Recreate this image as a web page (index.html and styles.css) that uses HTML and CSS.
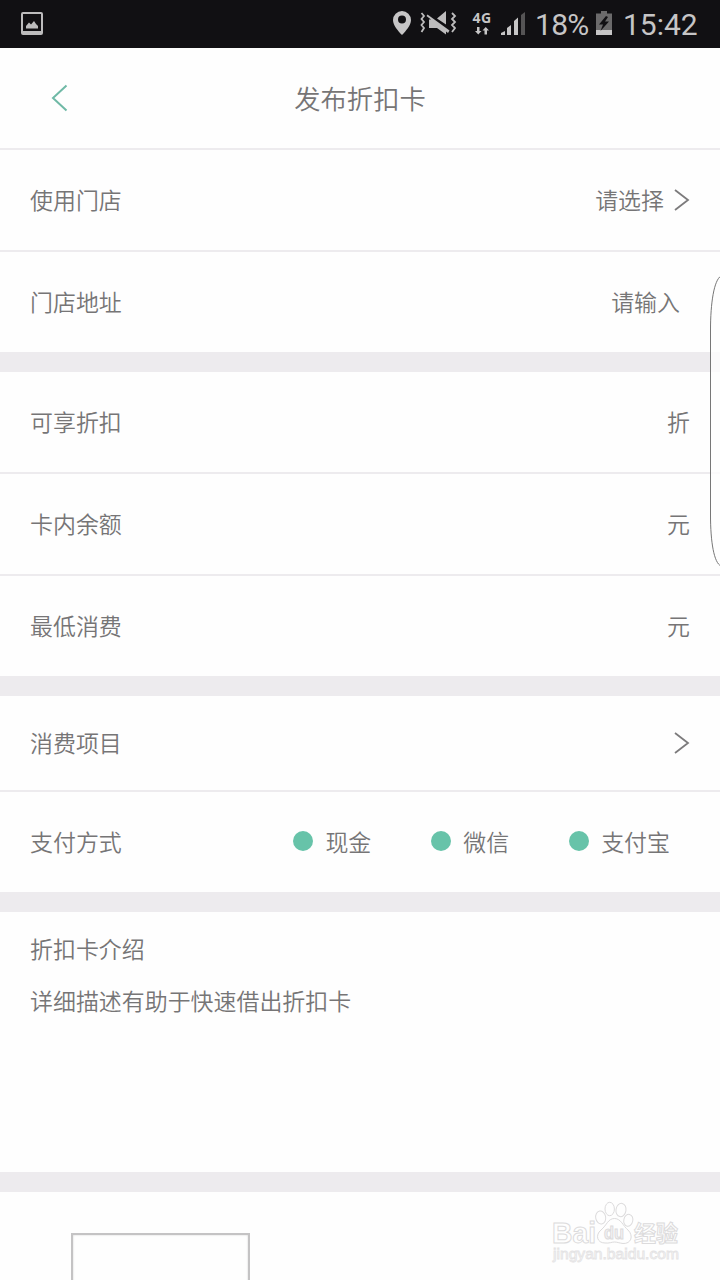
FILE: index.html
```html
<!DOCTYPE html>
<html lang="zh-CN">
  <head>
    <meta charset="UTF-8" />
    <meta name="viewport" content="width=device-width, initial-scale=1.0" />
    <title>发布折扣卡</title>
    <link rel="stylesheet" href="styles.css">
  </head>
  <body>
    <!-- Status bar -->
    <div class="status-bar">
      <svg class="icon-picture" width="22" height="24" viewBox="0 0 22 24">
        <path fill="#bdbcbd" fill-rule="evenodd" d="M2 0H20Q22 0 22 2V21Q22 23 20 23H2Q0 23 0 21V2Q0 0 2 0ZM2 2V19H20V2Z" />
        <path fill="#bdbcbd" d="M5 16.500V14L8 10.500L10 12.500L13 9L15 12L17 14V16.500Z" />
      </svg>
      <div class="status-right">
        <svg class="icon-pin" width="18" height="24" viewBox="0 0 18 24">
          <path fill="#c6c5c6" fill-rule="evenodd" d="M9 0A9 9 0 0 1 18 9C18 14 13 20 9 24C5 20 0 14 0 9A9 9 0 0 1 9 0ZM9 4.500A4 4 0 1 0 9 12.500A4 4 0 1 0 9 4.500Z" />
        </svg>
        <svg class="icon-mute" width="37" height="24" viewBox="0 0 37 24">
          <path fill="#bdbcbd" d="M17 7.500L26 0V13.500ZM7.500 3.500L29.500 19.500L28 22L26 20.500V23.500L17 17H9V8.500H11L6.500 5Z" />
          <path fill="none" stroke="#bdbcbd" stroke-width="1.800" d="M1.500 2L4 5L1.500 8L4 11L1.500 14L4 17L1.500 21M32 2L35 5L32 8L35 11L32 14L35 17L32 21" />
        </svg>
        <div class="network">
          <span>4G</span>
          <svg width="14" height="8" viewBox="0 0 14 8">
            <path fill="#c6c5c6" d="M2 0H4.500V4H6.500L3.250 7.500L0 4H2ZM9.500 7.500H12V3.500H14L10.750 0L7.500 3.500H9.500Z" />
          </svg>
        </div>
        <svg class="icon-signal" width="24" height="23" viewBox="0 0 24 23">
          <path fill="#c6c5c6" d="M0 23V21L4 19V23ZM6 23V16L10 13V23ZM13 23V9L17 5.500V23Z" />
          <path fill="#555455" d="M20 23V3L24 0V23Z" />
        </svg>
        <span class="percent">18%</span>
        <svg class="icon-battery" width="16" height="24" viewBox="0 0 16 24">
          <path fill="#6b6a6b" d="M5 0H11V2.500H16V20H0V2.500H5Z" />
          <path fill="#c6c5c6" d="M0 19H16V24H0Z" />
          <path fill="#111013" d="M10 5L3 13.500H7L4.500 20L13 10.500H9L12 6Z" />
        </svg>
        <span class="clock">15:42</span>
      </div>
    </div>

    <header class="header">
      <svg class="back" width="18" height="28" viewBox="0 0 18 28">
        <path d="M15.500 1.500L2 14L15.500 26.500" />
      </svg>
      <h1>发布折扣卡</h1>
    </header>

    <main>
      <section class="group">
        <div class="row">
          <span>使用门店</span>
          <span class="value">请选择
            <svg class="arrow" width="16" height="22" viewBox="0 0 16 22"><path d="M1 1L14 11L1 21" /></svg>
          </span>
        </div>
        <div class="row">
          <span>门店地址</span>
          <span class="value input">请输入</span>
        </div>
      </section>

      <section class="group">
        <div class="row"><span>可享折扣</span><span>折</span></div>
        <div class="row"><span>卡内余额</span><span>元</span></div>
        <div class="row"><span>最低消费</span><span>元</span></div>
      </section>

      <section class="group">
        <div class="row items">
          <span>消费项目</span>
          <svg class="arrow" width="16" height="22" viewBox="0 0 16 22"><path d="M1 1L14 11L1 21" /></svg>
        </div>
        <div class="row">
          <span>支付方式</span>
          <div class="payments">
            <span class="pay">现金</span>
            <span class="pay">微信</span>
            <span class="pay">支付宝</span>
          </div>
        </div>
      </section>

      <section class="group intro">
        <p>折扣卡介绍</p>
        <p class="hint">详细描述有助于快速借出折扣卡</p>
      </section>

      <section class="upload">
        <div class="upload-box"></div>
      </section>
    </main>

    <!-- Edge panel handle, lies over the rows -->
    <svg class="edge-panel" width="10" height="294" viewBox="0 0 10 294">
      <path d="M11 1C4 5 0.500 28 0.500 55V240C0.500 267 4 288 11 291" />
    </svg>

    <!-- Watermark -->
    <svg class="watermark" width="140" height="66" viewBox="0 0 140 66">
      <g class="outline">
        <text x="2" y="41.500" font-size="29" textLength="44" lengthAdjust="spacingAndGlyphs">Bai</text>
        <ellipse cx="50.700" cy="16.500" rx="5" ry="6.500" transform="rotate(-10 50.700 16.500)" />
        <ellipse cx="59.700" cy="8" rx="4.700" ry="6.700" />
        <ellipse cx="71" cy="9" rx="5" ry="6.700" transform="rotate(10 71 9)" />
        <ellipse cx="78.300" cy="19.300" rx="4.500" ry="6" transform="rotate(12 78.300 19.300)" />
        <path d="M64.500 17.500C71 17.500 73 25 78 29C84 35 81 43 73 42.500C69 42 67 41 64.500 41C62 41 59 42.500 55 42C47 42 45 34 51 29C57 24 58 17.500 64.500 17.500Z" />
        <text class="du" x="54" y="38" font-size="19" textLength="20" lengthAdjust="spacingAndGlyphs">du</text>
        <text class="cjk" x="84" y="40" font-size="22">经验</text>
        <text class="url" x="3" y="58" font-size="14" textLength="126" lengthAdjust="spacingAndGlyphs">jingyan.baidu.com</text>
      </g>
    </svg>
  </body>
</html>
```

FILE: styles.css
```css
* {
  box-sizing: border-box;
}
body {
  margin: 0;
  height: 1280px;
  overflow: hidden;
  position: relative;
  background-color: #fefefe;
  color: #767576;
  font-family: "Noto Sans CJK SC", sans-serif;
  font-size: 22.95px;
  font-weight: 350;
  line-height: 34px;
}
.status-bar {
  display: flex;
  justify-content: space-between;
  height: 48px;
  padding: 0 22px 0 21px;
  background-color: #111013;
  color: #c6c5c6;
  font-family: Roboto, sans-serif;
  font-weight: 400;
}
.icon-picture {
  margin-top: 12px;
}
.status-right {
  display: flex;
  align-items: flex-start;
}
.icon-pin {
  margin: 11px 9px 0 0;
}
.icon-mute {
  margin: 11px 15px 0 0;
}
.network {
  display: flex;
  flex-direction: column;
  align-items: center;
  width: 20px;
  margin: 11px 9px 0 0;
  font-family: "Open Sans", sans-serif;
  font-size: 14px;
  font-weight: 700;
  letter-spacing: 0.5px;
  line-height: 14px;
}
.network svg {
  margin-top: 2px;
}
.icon-signal {
  margin: 12px 10px 0 0;
}
.percent,
.clock {
  font-size: 30px;
  line-height: 49px;
}
.percent {
  width: 61px;
  letter-spacing: -0.7px;
}
.icon-battery {
  margin-top: 11px;
}
.clock {
  width: 75px;
  margin-left: 11px;
}
.header {
  display: grid;
  grid-template-columns: 90px 1fr 90px;
  align-items: center;
  height: 102px;
  border-bottom: 2px solid #edebee;
}
.back {
  margin-left: 51px;
  fill: none;
  stroke: #6fb9a6;
  stroke-width: 2;
}
h1 {
  margin: 0;
  text-align: center;
  font-size: 26.3px;
  font-weight: 350;
}
.group {
  border-bottom: 20px solid #edebee;
}
.row {
  display: flex;
  justify-content: space-between;
  align-items: center;
  height: 100px;
  padding: 0 30px 2px;
}
.row + .row {
  height: 102px;
  border-top: 2px solid #edebee;
}
.row.items {
  height: 94px;
}
.value {
  display: flex;
  align-items: center;
  gap: 10px;
}
.value.input {
  margin-right: 10px;
}
.arrow {
  margin-top: 2px;
  fill: none;
  stroke: #7c7b7c;
  stroke-width: 1.8;
}
.payments {
  display: flex;
  gap: 60px;
  margin-right: 20px;
}
.pay {
  display: flex;
  align-items: center;
}
.pay::before {
  content: "";
  width: 20px;
  height: 20px;
  margin-right: 12px;
  border-radius: 50%;
  background-color: #67c3a9;
}
.intro {
  height: 280px;
  padding: 19px 30px;
}
.intro p {
  margin: 0;
}
.intro .hint {
  margin-top: 18px;
}
.upload {
  padding: 41px 71px 0;
}
.upload-box {
  width: 179px;
  height: 100px;
  border: 2px solid #c4c3c4;
  box-shadow: inset 0 0 2px #ccc;
}
.edge-panel {
  position: absolute;
  top: 275px;
  right: 0;
  fill: rgba(254, 254, 254, 0.8);
  stroke: #777;
}
.watermark {
  position: absolute;
  top: 1201px;
  left: 550px;
}
.outline {
  fill: #fefefe;
  stroke: #dcdbdc;
  stroke-width: 1;
  font-family: "Liberation Sans", sans-serif;
  font-weight: 700;
}
.outline .du {
  fill: #f2f1f2;
}
.outline .cjk {
  font-family: "Noto Sans CJK SC", sans-serif;
}
.outline .url {
  stroke: #e4e3e4;
  stroke-width: 0.8;
  font-weight: 400;
}
```
